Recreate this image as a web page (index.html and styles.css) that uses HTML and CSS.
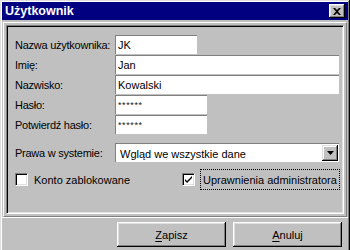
FILE: index.html
```html
<!DOCTYPE html>
<html lang="pl">
<head>
<meta charset="utf-8">
<title>Użytkownik</title>
<link rel="stylesheet" href="styles.css">
</head>
<body>
<div class="window">
  <div class="titlebar">
    <span class="title">Użytkownik</span>
    <span class="close">
      <svg width="8" height="7" viewBox="0 0 8 7"><path d="M0 0h2l2 2 2-2h2L5 3.5 8 7H6L4 5 2 7H0l3-3.5z" fill="#000"/></svg>
    </span>
  </div>
  <div class="panel-outer">
    <div class="panel">
      <div class="form">
        <label class="lbl">Nazwa użytkownika:</label>
        <div class="edit w82">JK</div>
        <label class="lbl">Imię:</label>
        <div class="edit w224">Jan</div>
        <label class="lbl">Nazwisko:</label>
        <div class="edit w224">Kowalski</div>
        <label class="lbl">Hasło:</label>
        <div class="edit w92"><span class="pw">******</span></div>
        <label class="lbl">Potwierdź hasło:</label>
        <div class="edit w92"><span class="pw">******</span></div>
      </div>
      <div class="form select-row">
        <label class="lbl">Prawa w systemie:</label>
        <div class="combo">
          <span class="combo-text">Wgląd we wszystkie dane</span>
          <span class="drop">
            <svg width="7" height="4" viewBox="0 0 7 4"><path d="M0 0h7L3.5 4z" fill="#000"/></svg>
          </span>
        </div>
      </div>
      <div class="checks">
        <div class="check">
          <span class="box"></span>
          <span class="check-label">Konto zablokowane</span>
        </div>
        <div class="check">
          <span class="box">
            <svg width="9" height="9" viewBox="0 0 9 9"><path d="M1 4l2 2 5-5v2L3 8 1 6z" fill="#000"/></svg>
          </span>
          <span class="check-label focus">Uprawnienia administratora</span>
        </div>
      </div>
    </div>
  </div>
  <div class="buttons">
    <span class="btn"><u>Z</u>apisz</span>
    <span class="btn"><u>A</u>nuluj</span>
  </div>
</div>
</body>
</html>
```
FILE: styles.css
```css
html, body {
  margin: 0;
  padding: 0;
  overflow: hidden;
  background: #c0c0c0;
}
body {
  font-family: "Liberation Sans", Arial, sans-serif;
  font-size: 11px;
  color: #000;
}
.window {
  box-sizing: border-box;
  width: 350px;
  height: 256px;
  padding: 2px;
  background: #c0c0c0;
  box-shadow: inset -1px -1px #000, inset 1px 1px #dfdfdf, inset -2px -2px #808080, inset 2px 2px #fff;
  display: flex;
  flex-direction: column;
}
.titlebar {
  height: 18px;
  background: #000080;
  color: #fff;
  display: flex;
  align-items: center;
  justify-content: space-between;
  padding: 0 3px 0 3px;
}
.title {
  font-weight: bold;
  font-size: 12.5px;
}
.close {
  width: 16px;
  height: 14px;
  box-sizing: border-box;
  background: #c0c0c0;
  box-shadow: inset -1px -1px #000, inset 1px 1px #fff, inset -2px -2px #808080, inset 2px 2px #dfdfdf;
  display: flex;
  align-items: center;
  justify-content: center;
  padding-right: 1px;
}
.panel-outer {
  box-sizing: border-box;
  height: 195px;
  margin: 2px 1px 0 1px;
  border: 1px solid;
  border-color: #fff #808080 #808080 #fff;
  padding: 2px;
  display: flex;
}
.panel {
  flex: 1;
  border: 1px solid;
  border-color: #808080 #fff #fff #808080;
  box-shadow: inset 1px 1px #000, inset -1px -1px #dfdfdf;
  padding: 9px 0 0 8px;
}
.form {
  display: grid;
  grid-template-columns: 100px auto;
  row-gap: 1px;
  align-items: center;
}
.lbl {
  white-space: nowrap;
  padding-top: 1px;
  letter-spacing: -0.25px;
}
.edit {
  box-sizing: border-box;
  height: 19px;
  background: #fff;
  border-top: 1px solid #808080;
  border-left: 1px solid #808080;
  padding: 1px 0 0 2px;
  line-height: 17px;
  white-space: nowrap;
}
.w82 { width: 82px; }
.w92 { width: 92px; }
.w224 { width: 224px; }
.pw {
  font-size: 9px;
  letter-spacing: 0.6px;
  vertical-align: 1px;
  color: #222;
}
.select-row {
  margin-top: 9px;
}
.combo {
  box-sizing: border-box;
  width: 224px;
  height: 19px;
  background: #fff;
  border-top: 1px solid #808080;
  border-left: 1px solid #808080;
  display: flex;
  align-items: center;
  justify-content: space-between;
  padding: 0 1px 0 4px;
}
.combo-text {
  padding-top: 1px;
}
.drop {
  box-sizing: border-box;
  width: 16px;
  height: 16px;
  background: #c0c0c0;
  box-shadow: inset -1px -1px #000, inset 1px 1px #dfdfdf, inset -2px -2px #808080, inset 2px 2px #fff;
  display: flex;
  align-items: center;
  justify-content: center;
  padding-bottom: 1px;
}
.checks {
  margin-top: 7px;
  height: 21px;
  display: grid;
  grid-template-columns: 167px auto;
  align-items: center;
}
.check {
  display: flex;
  align-items: center;
  height: 21px;
}
.box {
  box-sizing: border-box;
  width: 13px;
  height: 13px;
  background: #fff;
  border: 1px solid;
  border-color: #808080 #fff #fff #808080;
  box-shadow: inset 1px 1px #000, inset -1px -1px #dfdfdf;
  display: flex;
  align-items: center;
  justify-content: center;
}
.check-label {
  margin-left: 6px;
  white-space: nowrap;
}
.check-label.focus {
  margin-left: 5px;
  box-sizing: border-box;
  height: 21px;
  width: 140px;
  border: 1px dotted #000;
  padding: 0 2px;
  display: flex;
  align-items: center;
}
.buttons {
  border-top: 1px solid #fff;
  display: flex;
  justify-content: flex-end;
  gap: 7px;
  padding: 4px 6px 0 0;
}
.btn {
  box-sizing: border-box;
  width: 109px;
  height: 25px;
  background: #c0c0c0;
  box-shadow: inset -1px -1px #000, inset 1px 1px #fff, inset -2px -2px #808080, inset 2px 2px #dfdfdf;
  display: flex;
  align-items: center;
  justify-content: center;
}
.btn u {
  text-decoration-thickness: 1px;
  text-underline-offset: 2px;
}
```
